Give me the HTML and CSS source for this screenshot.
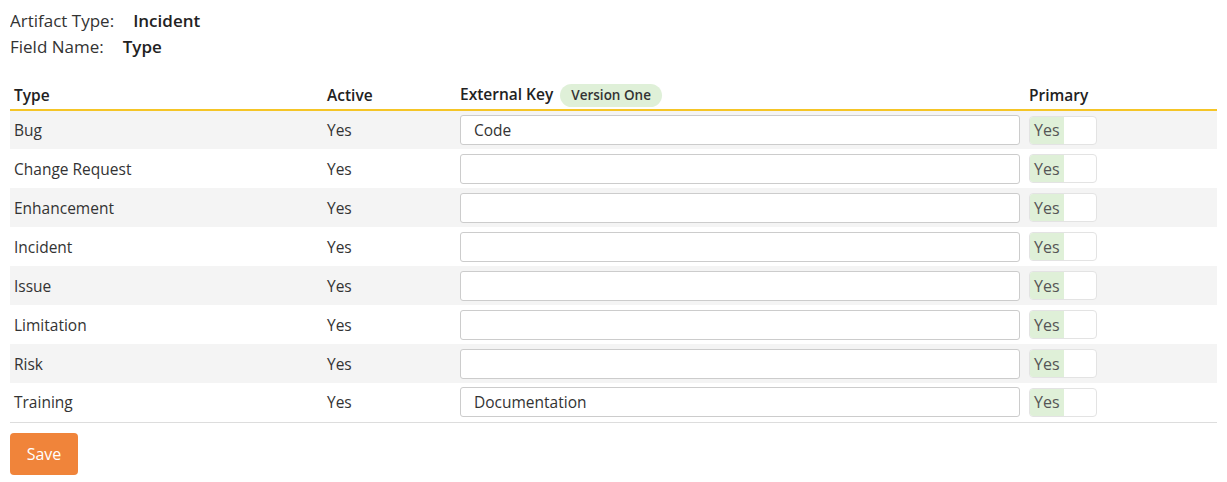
FILE: index.html
```html
<!DOCTYPE html>
<html>
<head>
<meta charset="utf-8">
<link rel="stylesheet" href="styles.css">
</head>
<body>
<div class="meta">
  <div class="meta-row"><span class="meta-label">Artifact Type:</span><span class="meta-value">Incident</span></div>
  <div class="meta-row"><span class="meta-label">Field Name:</span><span class="meta-value">Type</span></div>
</div>
<table class="grid">
  <colgroup>
    <col class="c-type"><col class="c-active"><col class="c-key"><col class="c-primary">
  </colgroup>
  <thead>
    <tr>
      <th>Type</th>
      <th>Active</th>
      <th>External Key <span class="badge">Version One</span></th>
      <th>Primary</th>
    </tr>
  </thead>
  <tbody>
    <tr><td>Bug</td><td>Yes</td><td><input class="key" value="Code"></td><td><span class="toggle"><span class="on">Yes</span></span></td></tr>
    <tr><td>Change Request</td><td>Yes</td><td><input class="key" value=""></td><td><span class="toggle"><span class="on">Yes</span></span></td></tr>
    <tr><td>Enhancement</td><td>Yes</td><td><input class="key" value=""></td><td><span class="toggle"><span class="on">Yes</span></span></td></tr>
    <tr><td>Incident</td><td>Yes</td><td><input class="key" value=""></td><td><span class="toggle"><span class="on">Yes</span></span></td></tr>
    <tr><td>Issue</td><td>Yes</td><td><input class="key" value=""></td><td><span class="toggle"><span class="on">Yes</span></span></td></tr>
    <tr><td>Limitation</td><td>Yes</td><td><input class="key" value=""></td><td><span class="toggle"><span class="on">Yes</span></span></td></tr>
    <tr><td>Risk</td><td>Yes</td><td><input class="key" value=""></td><td><span class="toggle"><span class="on">Yes</span></span></td></tr>
    <tr><td>Training</td><td>Yes</td><td><input class="key" value="Documentation"></td><td><span class="toggle"><span class="on">Yes</span></span></td></tr>
  </tbody>
</table>
<button class="save">Save</button>
</body>
</html>
```

FILE: styles.css
```css
body {
  margin: 10px 10px;
  font-family: "Open Sans", "Noto Sans", sans-serif;
  font-size: 15.5px;
  color: #333;
  background: #fff;
}
.meta {
  display: flex;
  flex-direction: column;
  gap: 4px;
}
.meta-row {
  font-size: 17px;
  line-height: 22px;
}
.meta-label {
  color: #333;
  margin-right: 19px;
}
.meta-value {
  font-weight: 600;
  color: #222;
}
.grid {
  width: 100%;
  table-layout: fixed;
  border-collapse: collapse;
  margin-top: 20px;
}
.c-type { width: 313px; }
.c-active { width: 133px; }
.c-key { width: 569px; }
.grid th {
  text-align: left;
  font-weight: 600;
  color: #222;
  padding: 5px 4px 2px;
  height: 23px;
  border-bottom: 2px solid #f5c526;
  white-space: nowrap;
}
.badge {
  display: inline-block;
  background: #dff0d8;
  color: #333;
  font-size: 13.5px;
  font-weight: 600;
  padding: 2px 11px;
  border-radius: 12px;
  margin-left: 3px;
  line-height: 19px;
}
.grid td {
  padding: 0 4px;
  height: 39px;
  box-sizing: border-box;
}
.grid tbody tr:nth-child(odd) td { background: #f4f4f4; }
.grid tbody tr:last-child td { border-bottom: 1px solid #ddd; }
.key {
  width: 560px;
  height: 30px;
  box-sizing: border-box;
  border: 1px solid #ccc;
  border-radius: 3px;
  padding: 0 13px;
  font-family: inherit;
  font-size: 15.5px;
  color: #333;
  background: #fff;
  display: block;
}
.toggle {
  display: flex;
  width: 68px;
  height: 29px;
  box-sizing: border-box;
  border: 1px solid #e3e3e3;
  border-radius: 4px;
  background: #fff;
  overflow: hidden;
}
.toggle .on {
  width: 34px;
  background: #dff0d8;
  color: #555;
  font-size: 16px;
  display: flex;
  align-items: center;
  padding-left: 4px;
  box-sizing: border-box;
}
.save {
  margin-top: 10px;
  background: #f0843a;
  color: #fff;
  border: none;
  border-radius: 4px;
  font-family: inherit;
  font-size: 16px;
  width: 68px;
  height: 42px;
}
```
